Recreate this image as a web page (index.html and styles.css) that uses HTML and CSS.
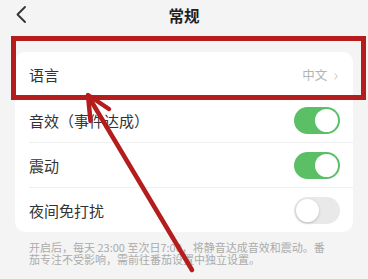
FILE: index.html
```html
<!DOCTYPE html>
<html lang="zh-CN">
<head>
    <meta charset="UTF-8">
    <meta name="viewport" content="width=device-width, initial-scale=1.0">
    <title>常规</title>
    <link rel="stylesheet" href="styles.css">
</head>
<body>
    <div class="cabecalho">
        <span class="voltar">
            <svg width="11" height="17" viewBox="0 0 11 17"><polyline points="9,1 1.5,8.5 9,16" fill="none" stroke="#333" stroke-width="1.8" stroke-linecap="round" stroke-linejoin="round"/></svg>
        </span>
        <h1>常规</h1>
        <span></span>
    </div>

    <div class="cartao">
        <div class="linha">
            <span class="rotulo">语言</span>
            <span class="valor">中文 <i class="seta">›</i></span>
        </div>
        <div class="linha">
            <span class="rotulo">音效（事件达成）</span>
            <span class="chave ligada"></span>
        </div>
        <div class="linha">
            <span class="rotulo">震动</span>
            <span class="chave ligada"></span>
        </div>
        <div class="linha">
            <span class="rotulo">夜间免打扰</span>
            <span class="chave"></span>
        </div>
    </div>

    <p class="nota">开启后，每天 23:00 至次日7:00，将静音达成音效和震动。番茄专注不受影响，需前往番茄设置中独立设置。</p>

    <!-- marcação vermelha por cima da tela -->
    <div class="destaque"></div>
    <svg class="flecha" width="368" height="279" viewBox="0 0 368 279">
        <line x1="90" y1="99" x2="192" y2="270" stroke="#b41d1c" stroke-width="4.5" stroke-linecap="round"/>
        <polyline points="90.5,121 88,95 109,109" fill="none" stroke="#b41d1c" stroke-width="4.5" stroke-linecap="round" stroke-linejoin="round"/>
    </svg>
</body>
</html>
```

FILE: styles.css
```css
body {
    font-family: "Noto Sans CJK SC", "Noto Sans", sans-serif;
    margin: 0;
    background: #f4f4f4;
    color: #333;
    width: 368px;
    height: 279px;
    overflow: hidden;
    position: relative;
}

.cabecalho {
    height: 29px;
    display: grid;
    grid-template-columns: 60px 1fr 60px;
    align-items: center;
}

.voltar {
    padding-left: 16px;
    display: flex;
}

.cabecalho h1 {
    margin: 0;
    text-align: center;
    font-size: 15.5px;
    font-weight: bold;
    color: #1f1f1f;
}

.cartao {
    margin: 23px 15px 0 15px;
    background: #fff;
    border-radius: 10px;
}

.linha {
    height: 45px;
    margin-left: 14px;
    padding-right: 13px;
    display: flex;
    align-items: center;
    justify-content: space-between;
    box-sizing: border-box;
}

.linha + .linha {
    border-top: 1px solid #efefef;
}

.rotulo {
    font-size: 15px;
    color: #333;
}

.valor {
    font-size: 12.5px;
    color: #b4b4b4;
    display: flex;
    align-items: center;
    gap: 6px;
    padding-right: 2px;
}

.seta {
    font-style: normal;
    font-size: 16px;
    color: #d0d0d0;
    line-height: 1;
    margin-top: -2px;
}

.chave {
    width: 46px;
    height: 27px;
    border-radius: 14px;
    background: #e9e9e9;
    position: relative;
}

.chave::after {
    content: "";
    position: absolute;
    top: 2px;
    left: 2px;
    width: 23px;
    height: 23px;
    border-radius: 50%;
    background: #fff;
    box-shadow: 0 1px 3px rgba(0, 0, 0, 0.2);
}

.chave.ligada {
    background: #5bbf66;
}

.chave.ligada::after {
    left: 21px;
    box-shadow: none;
}

.nota {
    margin: 10px 36px 0 29px;
    font-size: 11px;
    line-height: 11.5px;
    color: #ababab;
}

.destaque {
    position: absolute;
    left: 11px;
    top: 36px;
    width: 355px;
    height: 64px;
    box-sizing: border-box;
    border: 5.5px solid #b41d1c;
}

.flecha {
    position: absolute;
    left: 0;
    top: 0;
}
```
